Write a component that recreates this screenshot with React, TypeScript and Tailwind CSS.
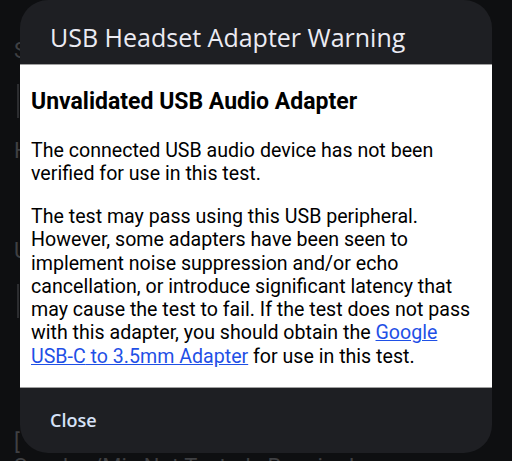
import React from "react";

export default function App() {
  return (
    <div className="relative w-[512px] h-[461px] overflow-hidden bg-[#0e0f11]">
      {/* background page (dimmed) */}
      <div className="flex flex-col pl-[14px] text-[#3f4043]" style={{ fontFamily: "Roboto, sans-serif" }}>
        <div className="mt-[38px] text-[22px] leading-[26px]">S</div>
        <div className="mt-[20px] ml-[3px] h-[34px] w-[2px] bg-[#2c2d30]" />
        <div className="mt-[20px] text-[22px] leading-[26px]">H</div>
        <div className="mt-[74px] text-[22px] leading-[26px]">U</div>
        <div className="mt-[20px] ml-[3px] h-[34px] w-[2px] bg-[#2c2d30]" />
        <div className="mt-[112px] text-[22px] leading-[26px]">[</div>
        <div className="mt-[-2px] text-[22px] leading-[26px] whitespace-nowrap">Speaker/Mic Not Tested - Required</div>
      </div>

      {/* dialog */}
      <div className="absolute left-[20px] top-0 w-[472px] h-[453px] rounded-[28px] bg-[#1e1f23] flex flex-col overflow-hidden">
        <div
          className="h-[64px] shrink-0 pl-[30px] pt-[23px] text-[25px] leading-[28px] font-medium text-[#ebebf3] whitespace-nowrap"
          style={{ fontFamily: "'Open Sans', sans-serif" }}
        >
          USB Headset Adapter Warning
        </div>
        <div
          className="h-[324px] shrink-0 bg-white border-y border-[#a0a0a0] pl-[11px] pr-[12px] pt-[23px] text-black"
          style={{ fontFamily: "Roboto, sans-serif" }}
        >
          <div className="text-[23px] leading-[28px] font-bold">Unvalidated USB Audio Adapter</div>
          <p className="mt-[23px] text-[19.6px] leading-[23px]">
            The connected USB audio device has not been verified for use in this test.
          </p>
          <p className="mt-[20px] text-[19.6px] leading-[23.3px]">
            The test may pass using this USB peripheral. However, some adapters have been seen to implement noise
            suppression and/or echo cancellation, or introduce significant latency that may cause the test to fail. If
            the test does not pass with this adapter, you should obtain the{" "}
            <span className="text-[#1f50e6] underline">
              Google <span className="whitespace-nowrap">USB-C</span> to 3.5mm Adapter
            </span>{" "}
            for use in this test.
          </p>
        </div>
        <div
          className="pl-[30px] pt-[20px] text-[18px] leading-[24px] font-semibold text-[#d6e2f7]"
          style={{ fontFamily: "'Open Sans', sans-serif" }}
        >
          Close
        </div>
      </div>
    </div>
  );
}
